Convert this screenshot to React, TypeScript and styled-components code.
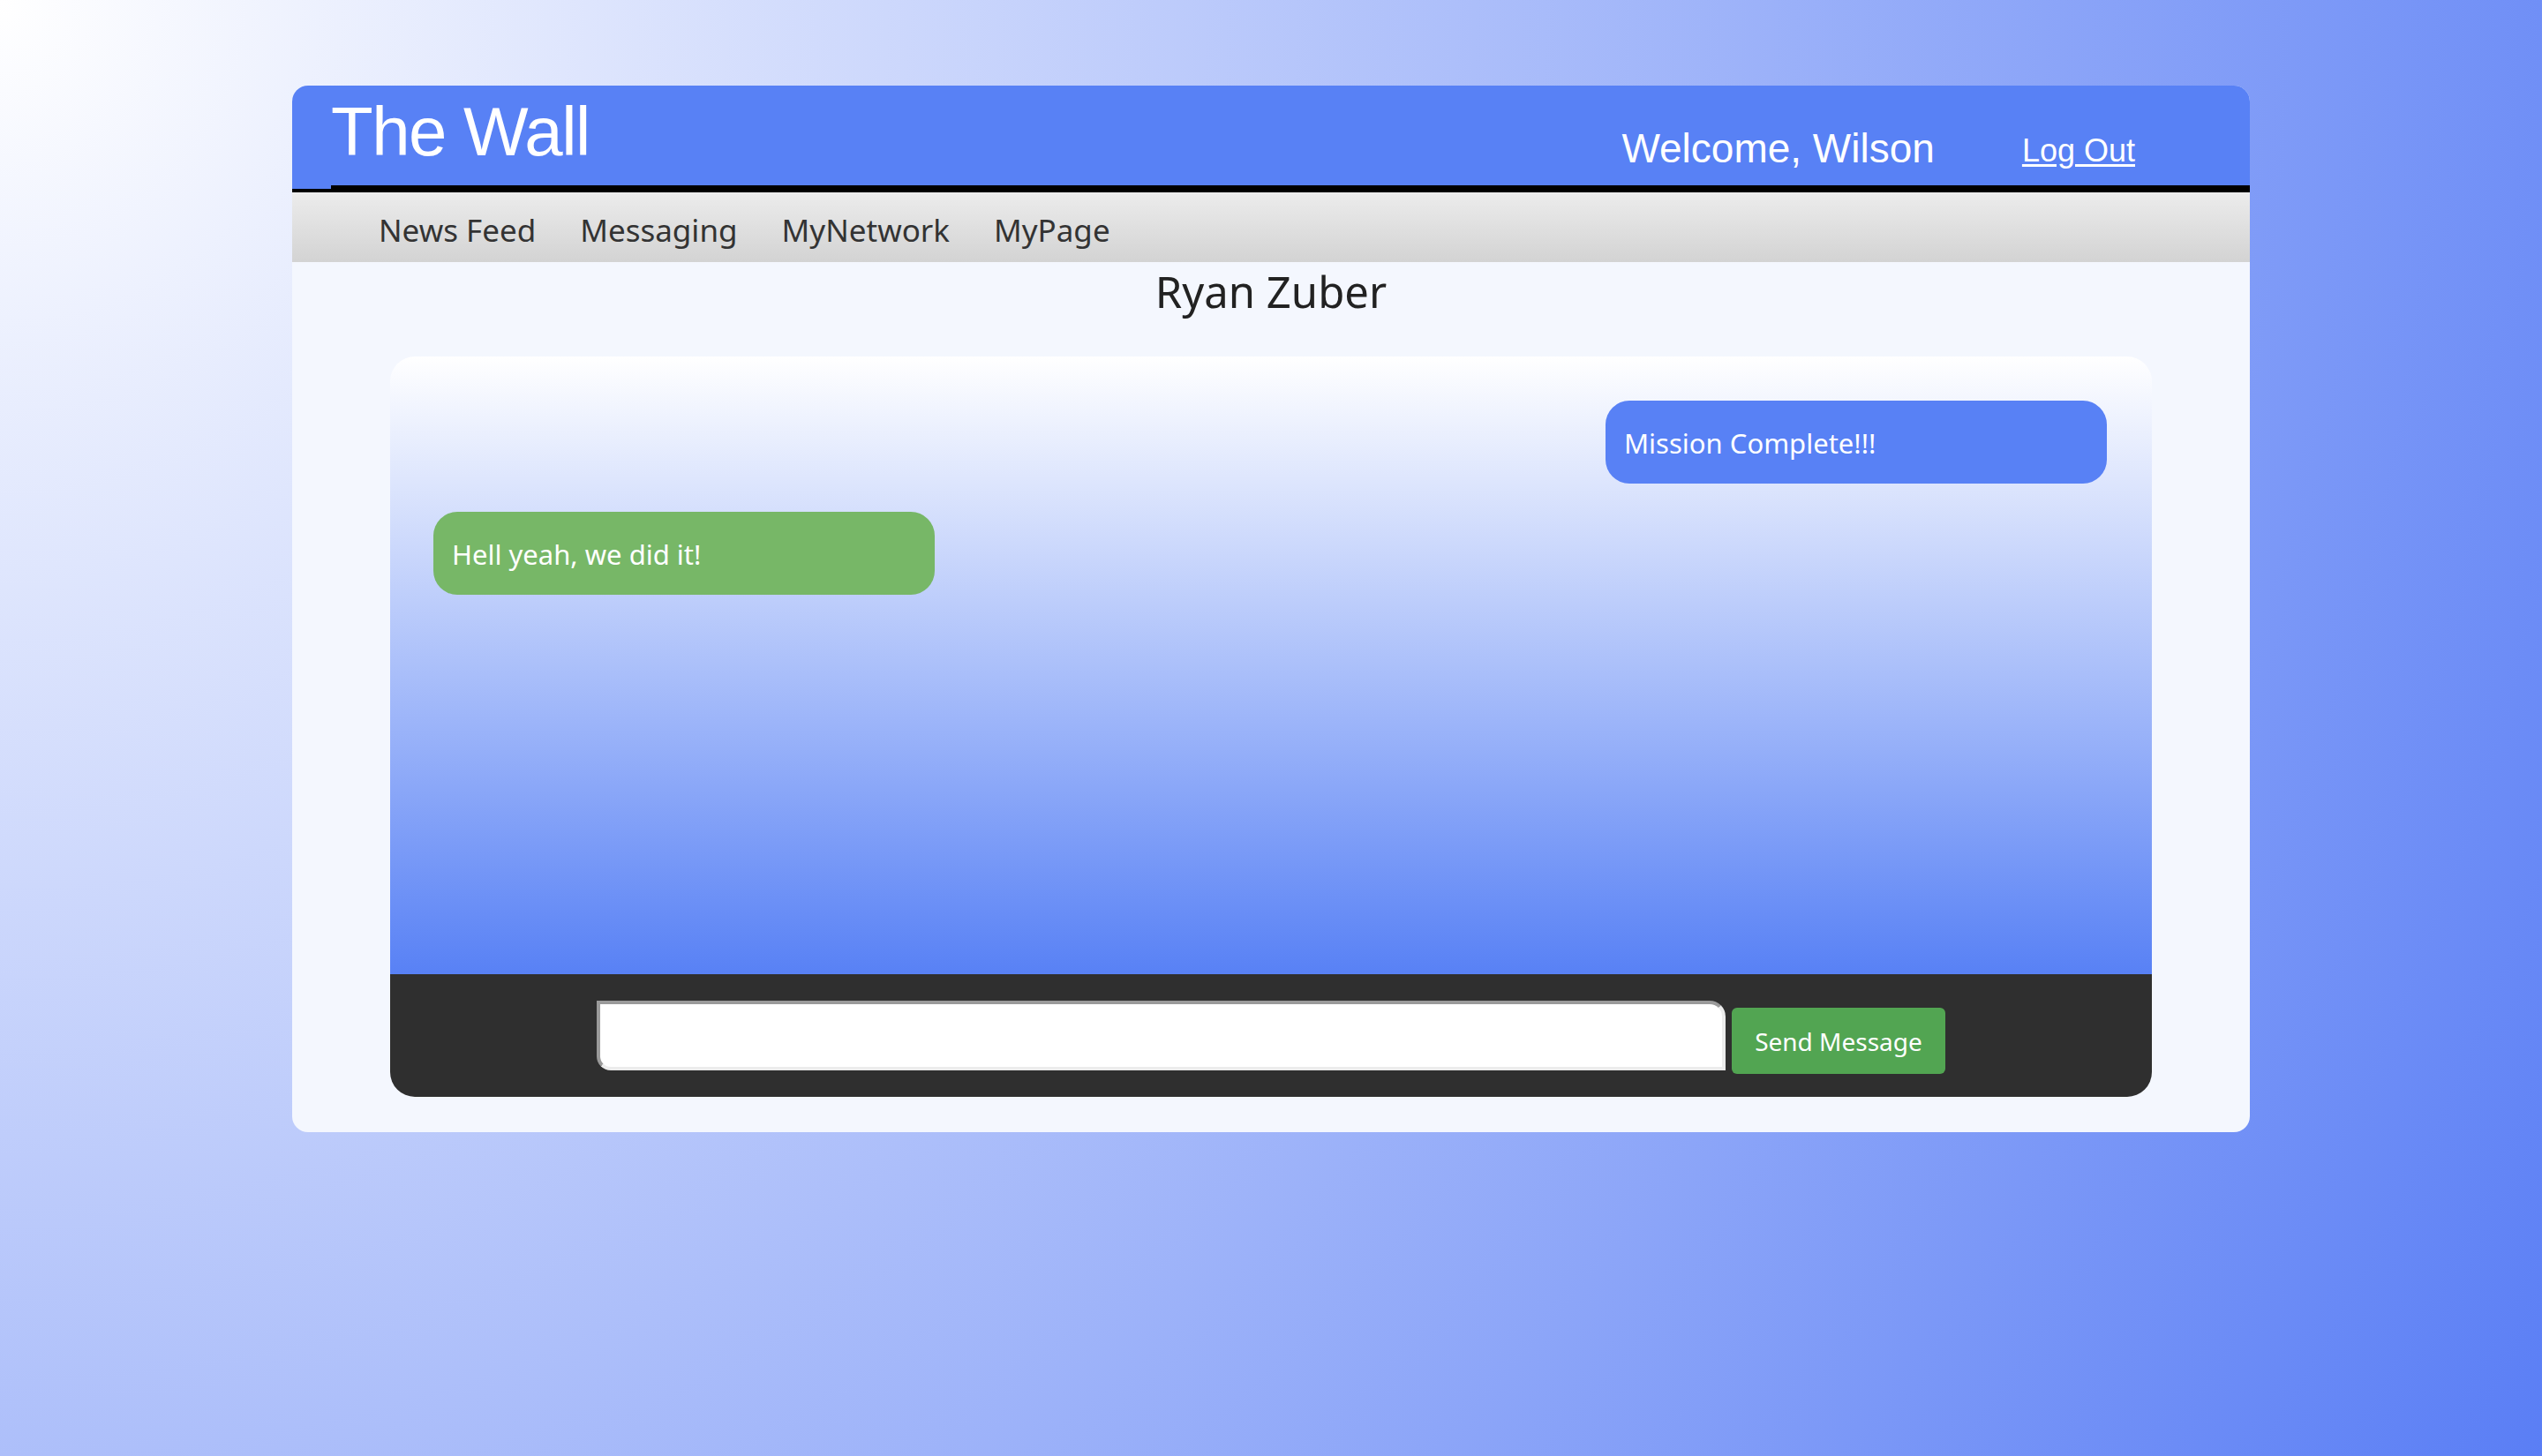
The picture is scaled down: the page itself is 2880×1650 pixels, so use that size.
import React from "react";
import styled, { createGlobalStyle } from "styled-components";

const Global = createGlobalStyle`
  html, body {
    margin: 0;
    padding: 0;
  }
  body {
    min-height: 100vh;
    font-family: "Noto Sans", "Open Sans", sans-serif;
    background: radial-gradient(circle farthest-corner at 0 0, #ffffff 0%, #5a7ef5 100%);
    background-attachment: fixed;
  }
  * { box-sizing: border-box; }
`;

const Page = styled.div`
  padding-top: 97px;
  min-height: 100vh;
`;

const Card = styled.main`
  width: 2218px;
  margin: 0 auto;
  background: #f4f7fe;
  border-radius: 18px;
  overflow: hidden;
  padding-bottom: 40px;
`;

const Header = styled.header`
  background: #5881f5;
  border-bottom: 4px solid #000;
  display: flex;
`;

const HeaderInner = styled.div`
  flex: 1;
  margin-left: 44px;
  height: 117px;
  border-bottom: 4px solid #000;
  display: flex;
  align-items: flex-start;
  padding-right: 130px;
  font-family: "Liberation Sans", Arial, sans-serif;
  color: #fff;
`;

const Title = styled.h1`
  margin: 13px auto 0 0;
  font-size: 78px;
  line-height: 1;
  font-weight: 400;
  letter-spacing: -1.5px;
`;

const Welcome = styled.span`
  margin: 48px 99px 0 0;
  font-size: 46px;
  line-height: 1;
`;

const LogOut = styled.a`
  margin-top: 56px;
  font-size: 36px;
  line-height: 1;
  color: #fff;
  text-decoration: underline;
  text-underline-offset: 3px;
`;

const Nav = styled.nav`
  height: 79px;
  background: linear-gradient(to bottom, #ececec, #d3d3d3);
  display: flex;
  align-items: flex-start;
  gap: 50px;
  padding: 25px 0 0 98px;
`;

const NavLink = styled.a`
  font-size: 35px;
  line-height: 1;
  color: #333;
  text-decoration: none;
`;

const ContactName = styled.h2`
  margin: 9px 0 0;
  text-align: center;
  font-size: 49px;
  line-height: 1;
  font-weight: 400;
  color: #222;
`;

const ChatBox = styled.section`
  width: 1996px;
  margin: 49px auto 0;
  border-radius: 28px;
  overflow: hidden;
`;

const Messages = styled.div`
  height: 700px;
  background: linear-gradient(to bottom, #ffffff 0%, #5881f5 100%);
  display: flex;
  flex-direction: column;
  gap: 32px;
  padding: 50px 51px 0 49px;
`;

const Bubble = styled.div<{ $mine?: boolean }>`
  align-self: ${(p) => (p.$mine ? "flex-end" : "flex-start")};
  width: 568px;
  height: 94px;
  border-radius: 27px;
  background: ${(p) => (p.$mine ? "#5881f5" : "#77b767")};
  color: #fff;
  font-size: 31px;
  display: flex;
  align-items: center;
  padding: 2px 21px 0;
  line-height: 1;
`;

const Composer = styled.form`
  height: 139px;
  background: #2f2f2f;
  display: flex;
  justify-content: center;
  align-items: center;
  gap: 7px;
`;

const MessageInput = styled.input`
  width: 1279px;
  height: 79px;
  background: #fff;
  border-style: solid;
  border-width: 4px;
  border-color: #9a9a9a #ececec #ececec #9a9a9a;
  border-radius: 0 18px 0 16px;
  font-family: "Noto Sans", sans-serif;
  font-size: 28px;
  padding: 0 16px;
  outline: none;
`;

const SendButton = styled.button`
  width: 242px;
  height: 75px;
  margin-top: 12px;
  background: #52a552;
  color: #fff;
  border: none;
  border-radius: 6px;
  font-family: "Noto Sans", sans-serif;
  font-size: 28px;
  line-height: 1;
  padding: 0;
  cursor: pointer;
`;

const navItems = ["News Feed", "Messaging", "MyNetwork", "MyPage"];

export default function App() {
  return (
    <>
      <Global />
      <Page>
        <Card>
          <Header>
            <HeaderInner>
              <Title>The Wall</Title>
              <Welcome>Welcome, Wilson</Welcome>
              <LogOut href="#">Log Out</LogOut>
            </HeaderInner>
          </Header>
          <Nav>
            {navItems.map((item) => (
              <NavLink key={item} href="#">
                {item}
              </NavLink>
            ))}
          </Nav>
          <ContactName>Ryan Zuber</ContactName>
          <ChatBox>
            <Messages>
              <Bubble $mine>Mission Complete!!!</Bubble>
              <Bubble>Hell yeah, we did it!</Bubble>
            </Messages>
            <Composer onSubmit={(e) => e.preventDefault()}>
              <MessageInput type="text" />
              <SendButton type="submit">Send Message</SendButton>
            </Composer>
          </ChatBox>
        </Card>
      </Page>
    </>
  );
}
